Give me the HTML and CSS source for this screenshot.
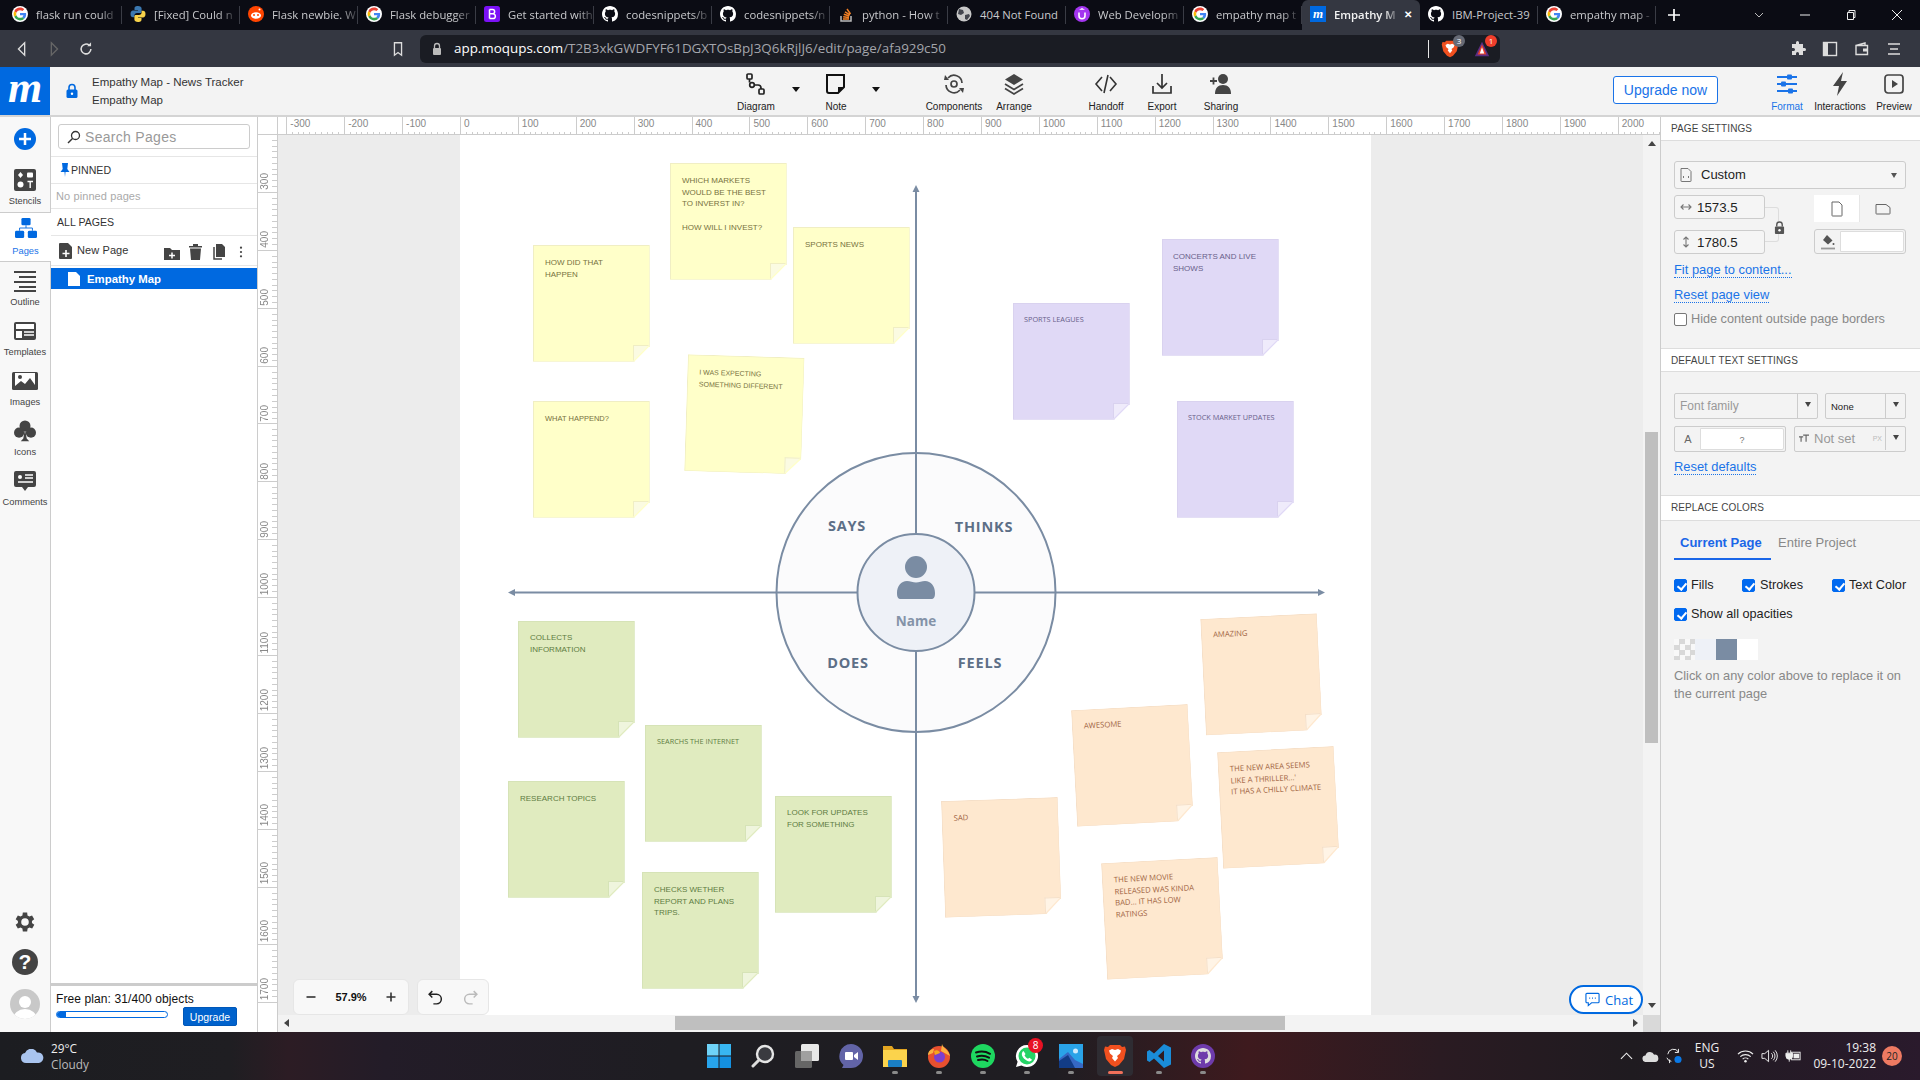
FILE: index.html
```html
<!DOCTYPE html>
<html lang="en">
<head>
<meta charset="utf-8">
<title>Empathy Map - Moqups</title>
<link rel="stylesheet" href="styles.css">
</head>
<body>
<svg class="defs" width="0" height="0" aria-hidden="true">
  <symbol id="g" viewBox="-6 -6 60 60">
    <circle cx="24" cy="24" r="30" fill="#fff"/>
    <path fill="#EA4335" d="M24 9.5c3.54 0 6.71 1.22 9.21 3.6l6.85-6.85C35.9 2.38 30.47 0 24 0 14.62 0 6.51 5.38 2.56 13.22l7.98 6.19C12.43 13.72 17.74 9.5 24 9.5z"/>
    <path fill="#4285F4" d="M46.98 24.55c0-1.57-.15-3.09-.38-4.55H24v9.02h12.94c-.58 2.96-2.26 5.48-4.78 7.18l7.73 6c4.51-4.18 7.09-10.36 7.09-17.65z"/>
    <path fill="#FBBC05" d="M10.53 28.59c-.48-1.45-.76-2.99-.76-4.59s.27-3.14.76-4.59l-7.98-6.19C.92 16.46 0 20.12 0 24c0 3.88.92 7.54 2.56 10.78l7.97-6.19z"/>
    <path fill="#34A853" d="M24 48c6.48 0 11.93-2.13 15.89-5.81l-7.73-6c-2.15 1.45-4.92 2.3-8.16 2.3-6.26 0-11.57-4.22-13.47-9.91l-7.98 6.19C6.51 42.62 14.62 48 24 48z"/>
  </symbol>
  <symbol id="gh" viewBox="0 0 16 16">
    <circle cx="8" cy="8" r="7" fill="#0b0c14"/>
    <path fill="#fff" d="M8 0C3.58 0 0 3.58 0 8c0 3.54 2.29 6.53 5.47 7.59.4.07.55-.17.55-.38 0-.19-.01-.82-.01-1.49-2.01.37-2.53-.49-2.69-.94-.09-.23-.48-.94-.82-1.13-.28-.15-.68-.52-.01-.53.63-.01 1.08.58 1.23.82.72 1.21 1.87.87 2.33.66.07-.52.28-.87.51-1.07-1.78-.2-3.64-.89-3.64-3.95 0-.87.31-1.59.82-2.15-.08-.2-.36-1.02.08-2.12 0 0 .67-.21 2.2.82.64-.18 1.32-.27 2-.27s1.36.09 2 .27c1.53-1.04 2.2-.82 2.2-.82.44 1.1.16 1.92.08 2.12.51.56.82 1.27.82 2.15 0 3.07-1.87 3.75-3.65 3.95.29.25.54.73.54 1.48 0 1.07-.01 1.93-.01 2.2 0 .21.15.46.55.38A8.013 8.013 0 0016 8c0-4.42-3.58-8-8-8z"/>
  </symbol>
  <symbol id="brave" viewBox="0 0 24 24">
    <path fill="#f1501f" d="M7 1h10l2 2 3-.5L23 6l-2 9-5 6-4 2-4-2-5-6-2-9 1-3.500L5 3z"/>
    <path fill="#fff" d="M12 6l3-1 3 1.500-1 3-3 2.500 1 2-3 3.500-3-3.500 1-2-3-2.500-1-3L9 5z"/>
  </symbol>
</svg>

<div class="screen">

  <header class="tabs">
    <div class="tab"><svg class="fav"><use href="#g"/></svg><span class="tab-t">flask run could</span></div>
    <div class="tab"><svg class="fav" viewBox="0 0 16 16"><path fill="#3b78b0" d="M8 0C5 0 4.500 1.300 4.500 2.500V4H8v.6H3C1.500 4.600.5 5.800.5 8s1 3.300 2.500 3.300h1.400V9.500C4.400 8 5.500 7 7 7h3c1 0 1.600-.7 1.600-1.600V2.500C11.600 1 10.300 0 8 0z"/><path fill="#f7d24a" d="M8 16c3 0 3.500-1.300 3.500-2.500V12H8v-.6h5c1.500 0 2.500-1.200 2.500-3.400s-1-3.300-2.500-3.300h-1.400v1.800C11.600 8 10.500 9 9 9H6c-1 0-1.600.7-1.600 1.600v2.900C4.400 15 5.700 16 8 16z"/></svg><span class="tab-t">[Fixed] Could n</span></div>
    <div class="tab"><svg class="fav" viewBox="0 0 16 16"><circle cx="8" cy="8" r="8" fill="#ff4500"/><ellipse cx="8" cy="9.500" rx="5" ry="3.300" fill="#fff"/><circle cx="6" cy="9" r="1" fill="#ff4500"/><circle cx="10" cy="9" r="1" fill="#ff4500"/><circle cx="11.500" cy="3.500" r="1" fill="#fff"/></svg><span class="tab-t">Flask newbie. W</span></div>
    <div class="tab"><svg class="fav"><use href="#g"/></svg><span class="tab-t">Flask debugger</span></div>
    <div class="tab"><svg class="fav" viewBox="0 0 16 16"><rect width="16" height="16" rx="2.500" fill="#7b11f5"/><path fill="none" stroke="#fff" stroke-width="1.500" d="M5.500 3.500v9M5.500 3.500h3a2 2 0 010 4.300h-3M5.500 7.800h3.500a2.300 2.300 0 010 4.700H5.500"/></svg><span class="tab-t">Get started with</span></div>
    <div class="tab"><svg class="fav"><use href="#gh"/></svg><span class="tab-t">codesnippets/b</span></div>
    <div class="tab"><svg class="fav"><use href="#gh"/></svg><span class="tab-t">codesnippets/n</span></div>
    <div class="tab"><svg class="fav" viewBox="0 0 16 16"><path fill="none" stroke="#bcbbbb" stroke-width="1.500" d="M3 10v5h10v-5"/><path fill="none" stroke="#f48024" stroke-width="1.500" d="M5 13h6M5.200 10.700l5.800.7M5.800 8.300l5.500 1.700M7 5.800l5 3M9 3l3.500 5"/></svg><span class="tab-t">python - How t</span></div>
    <div class="tab"><svg class="fav" viewBox="0 0 16 16"><circle cx="8" cy="8" r="7.500" fill="#c8c8c8"/><path fill="#43454e" d="M3 3l4 1 1 3-3 2-3-1zM9 9l4-1 1 2-3 4-2-1z"/></svg><span class="tab-t tab-full">404 Not Found</span></div>
    <div class="tab"><svg class="fav" viewBox="0 0 16 16"><circle cx="8" cy="8" r="8" fill="#a435f0"/><path fill="none" stroke="#fff" stroke-width="1.600" d="M5 6.500v3.200a3 3 0 006 0V6.500"/><path fill="#fff" d="M8 2l3 1.700H5z"/></svg><span class="tab-t">Web Developm</span></div>
    <div class="tab"><svg class="fav"><use href="#g"/></svg><span class="tab-t">empathy map t</span></div>
    <div class="tab tab-on"><span class="fav fav-m">m</span><span class="tab-t">Empathy M</span><span class="tab-x">✕</span></div>
    <div class="tab"><svg class="fav"><use href="#gh"/></svg><span class="tab-t tab-full">IBM-Project-39</span></div>
    <div class="tab"><svg class="fav"><use href="#g"/></svg><span class="tab-t">empathy map -</span></div>
    <svg class="newtab" viewBox="0 0 14 14"><path d="M7 1v12M1 7h12" stroke="#fff" stroke-width="1.700"/></svg>
    <div class="winctl">
      <svg class="wc" viewBox="0 0 10 10"><path d="M1 3l4 4 4-4" fill="none" stroke="#bbb"/></svg>
      <svg class="wc" viewBox="0 0 10 10"><path d="M0 5h10" stroke="#eee"/></svg>
      <svg class="wc" viewBox="0 0 10 10"><path d="M1.500 2.500h6v7h-6zM3 2.500V.5h6v7H7.500" fill="none" stroke="#eee"/></svg>
      <svg class="wc" viewBox="0 0 10 10"><path d="M0 0l10 10M10 0L0 10" stroke="#eee"/></svg>
    </div>
  </header>

  <nav class="bar">
    <svg class="bi" viewBox="0 0 14 18"><path d="M10 2L3 9l7 7z" fill="none" stroke="#ddd" stroke-width="1.500"/></svg>
    <svg class="bi" viewBox="0 0 14 18"><path d="M4 2l7 7-7 7z" fill="none" stroke="#666" stroke-width="1.500"/></svg>
    <svg class="bi" viewBox="0 0 18 18"><path d="M14.500 9a5.500 5.500 0 11-1.800-4.100" fill="none" stroke="#ddd" stroke-width="1.700"/><path d="M14.700 1.500v4.300h-4.300z" fill="#ddd"/></svg>
    <svg class="bi bi-book" viewBox="0 0 14 18"><path d="M3 2h8v14l-4-3-4 3z" fill="none" stroke="#ddd" stroke-width="1.500"/></svg>
    <div class="url">
      <svg class="url-lock" viewBox="0 0 12 14"><path d="M3.500 6V4a2.500 2.500 0 015 0v2" fill="none" stroke="#bbb" stroke-width="1.300"/><rect x="2" y="6" width="8" height="7" rx="1" fill="#bbb"/></svg>
      <span class="url-t"><b>app.moqups.com</b>/T2B3xkGWDFYF61DGXTOsBpJ3Q6kRjlJ6/edit/page/afa929c50</span>
      <span class="url-sep"></span>
      <span class="shield"><svg class="shield-i"><use href="#brave"/></svg><span class="pill pill-g">3</span></span>
      <span class="shield"><svg class="shield-i" viewBox="0 0 20 20"><path d="M10 2l8 16H2z" fill="#5a2c82"/><path d="M10 5l5 11H5z" fill="#e8402a"/><path d="M10 8l2.500 7h-5z" fill="#fff"/></svg><span class="pill pill-r">1</span></span>
    </div>
    <svg class="bi bi-puzzle" viewBox="0 0 16 16"><path fill="#ddd" d="M6 1.500a1.500 1.500 0 013 0V3h4v4h1.500a1.500 1.500 0 010 3H13v4H9v-1.500a1.500 1.500 0 00-3 0V14H2v-4h1.500a1.500 1.500 0 000-3H2V3h4z"/></svg>
    <svg class="bi" viewBox="0 0 16 16"><rect x="1.500" y="1.500" width="13" height="13" fill="none" stroke="#ddd" stroke-width="1.400"/><rect x="1.500" y="1.500" width="4.500" height="13" fill="#ddd"/></svg>
    <svg class="bi" viewBox="0 0 16 16"><path d="M2 4.500h11.500v9H2zM2 4.500l9-2.500v2.500" fill="none" stroke="#ddd" stroke-width="1.400"/><rect x="9" y="7.500" width="5" height="3" fill="#ddd"/></svg>
    <svg class="bi" viewBox="0 0 16 16"><path d="M2 3h12M4 8h8M2 13h12" stroke="#ddd" stroke-width="1.500"/></svg>
  </nav>

  <div class="hdr">
    <div class="hdr-left">
      <div class="logo">m</div>
      <svg class="hdr-lock" viewBox="0 0 14 16"><path d="M4 7V4.500a3 3 0 016 0V7" fill="none" stroke="#0069e0" stroke-width="1.600"/><rect x="1.500" y="6.500" width="11" height="8.500" rx="1.500" fill="#0069e0"/><circle cx="7" cy="10.700" r="1.200" fill="#fff"/></svg>
      <div class="hdr-names"><div>Empathy Map - News Tracker</div><div>Empathy Map</div></div>
    </div>
    <div class="tool"><svg class="tool-i" viewBox="0 0 24 24"><g fill="none" stroke="#222" stroke-width="1.700"><rect x="3" y="2" width="5" height="5" rx="1"/><rect x="15" y="17" width="5" height="5" rx="1"/><circle cx="8" cy="13" r="2.300"/><path d="M5.500 7v3.500M10.300 13H14a3 3 0 013 3v1"/></g></svg><span>Diagram</span></div>
    <span class="caret"></span>
    <div class="tool"><svg class="tool-i" viewBox="0 0 24 24"><path d="M3 3h17v12l-6 6H5a2 2 0 01-2-2z" fill="none" stroke="#111" stroke-width="2"/><path d="M14 21v-6h6z" fill="#111"/></svg><span>Note</span></div>
    <span class="caret caret-w"></span>
    <div class="tool t-comp"><svg class="tool-i" viewBox="0 0 24 24"><g fill="none" stroke="#444" stroke-width="1.700"><path d="M20 11a8 8 0 00-14-5"/><path d="M4 13a8 8 0 0014 5"/><circle cx="12" cy="12" r="3"/></g><path d="M3 3l4 5H2zM21 21l-4-5h5z" fill="#444"/></svg><span>Components</span></div>
    <div class="tool"><svg class="tool-i" viewBox="0 0 24 24"><path d="M12 2l9 5.500-9 5.500-9-5.500z" fill="#444"/><path d="M3 12l9 5.500 9-5.500M3 16.500L12 22l9-5.500" fill="none" stroke="#444" stroke-width="1.700"/></svg><span>Arrange</span></div>
    <div class="tool t-hand"><svg class="tool-i" viewBox="0 0 24 24"><path d="M8 5l-6 7 6 7M16 5l6 7-6 7M14 3l-4 18" fill="none" stroke="#333" stroke-width="1.600"/></svg><span>Handoff</span></div>
    <div class="tool t-exp"><svg class="tool-i" viewBox="0 0 24 24"><path d="M12 2v14M7 11l5 5 5-5M3 14v7h18v-7" fill="none" stroke="#333" stroke-width="1.700"/></svg><span>Export</span></div>
    <div class="tool t-share"><svg class="tool-i" viewBox="0 0 24 24"><circle cx="14" cy="7" r="5" fill="#444"/><path d="M6 22c0-6 3-9 8-9s8 3 8 9z" fill="#444"/><path d="M1 9h7M4.500 5.500v7" stroke="#444" stroke-width="1.800"/></svg><span>Sharing</span></div>
    <button class="upg-now">Upgrade now</button>
    <div class="tool t-fmt on"><svg class="tool-i" viewBox="0 0 24 24"><path d="M2 5h20M2 12h20M2 19h20" stroke="#1a73e8" stroke-width="1.800"/><rect x="12" y="2.500" width="5" height="5" rx="1" fill="#1a73e8"/><rect x="6" y="9.500" width="5" height="5" rx="1" fill="#1a73e8"/><rect x="13" y="16.500" width="5" height="5" rx="1" fill="#1a73e8"/></svg><span>Format</span></div>
    <div class="tool t-int"><svg class="tool-i" viewBox="0 0 24 24"><path d="M15 0L5 14h6l-2 10 10-15h-6z" fill="#444"/></svg><span>Interactions</span></div>
    <div class="tool t-prev"><svg class="tool-i" viewBox="0 0 24 24"><rect x="3" y="3" width="18" height="18" rx="3" fill="none" stroke="#444" stroke-width="1.700"/><path d="M10 8l6 4-6 4z" fill="#444"/></svg><span>Preview</span></div>
  </div>

  <main class="main">
    <aside class="rail">
      <div class="rail-add"><svg class="add" viewBox="0 0 22 22"><circle cx="11" cy="11" r="11" fill="#0069e0"/><path d="M11 5v12M5 11h12" stroke="#fff" stroke-width="2.500"/></svg></div>
      <div class="ri ri-st"><svg class="ri-i" viewBox="0 0 22 22"><rect width="22" height="22" rx="2" fill="#444"/><path d="M6.500 3l2.500 3-2.500 3L4 6z" fill="#fff"/><rect x="13" y="3.500" width="6" height="5" rx="1" fill="#fff"/><circle cx="6.500" cy="15.500" r="3" fill="#fff"/><path d="M13.500 12.500h5.500M16.200 12.500v6.500" stroke="#fff" stroke-width="1.400"/></svg><span>Stencils</span></div>
      <div class="ri ri-on"><svg class="ri-i" viewBox="0 0 24 22"><rect x="7" y="0" width="10" height="8" rx="1.500" fill="#0069e0"/><rect x="0" y="14" width="10" height="8" rx="1.500" fill="#0069e0"/><rect x="14" y="14" width="10" height="8" rx="1.500" fill="#0069e0"/><path d="M12 8v3M5 14v-3h14v3" fill="none" stroke="#0069e0"/></svg><span>Pages</span></div>
      <div class="ri"><svg class="ri-i" viewBox="0 0 22 22"><path d="M0 2h22M5 7h17M0 12h22M5 17h17M0 21h22" stroke="#444" stroke-width="2"/></svg><span>Outline</span></div>
      <div class="ri"><svg class="ri-i" viewBox="0 0 22 18"><rect width="22" height="18" rx="2" fill="#444"/><rect x="2" y="2" width="18" height="5" fill="#fff"/><rect x="2" y="9" width="6" height="7" fill="#fff"/><path d="M10 10h10M10 13h10" stroke="#fff" stroke-width="1.500"/></svg><span>Templates</span></div>
      <div class="ri"><svg class="ri-i ri-w" viewBox="0 0 26 18"><rect width="26" height="18" rx="1.500" fill="#444"/><rect x="3" y="1" width="20" height="16" fill="#fff"/><circle cx="8" cy="5" r="2" fill="#444"/><path d="M3 14l6-5 4 3 5-6 5 7v4H3z" fill="#444"/></svg><span>Images</span></div>
      <div class="ri"><svg class="ri-i ri-w" viewBox="0 0 26 26"><circle cx="13" cy="7" r="6.500" fill="#444"/><circle cx="6" cy="15" r="6" fill="#444"/><circle cx="20" cy="15" r="6" fill="#444"/><path d="M13 10l2 12 3 3H8l3-3z" fill="#444"/></svg><span>Icons</span></div>
      <div class="ri"><svg class="ri-i" viewBox="0 0 22 20"><path d="M2 0h18a2 2 0 012 2v12a2 2 0 01-2 2h-6l-3 4-3-4H2a2 2 0 01-2-2V2a2 2 0 012-2z" fill="#444"/><circle cx="6" cy="6" r="2" fill="#fff"/><path d="M11 4h8M11 7h8M4 11h15" stroke="#fff" stroke-width="1.400"/></svg><span>Comments</span></div>
      <div class="rail-bot">
        <svg class="bot-i" viewBox="0 0 24 24"><path fill="#444" d="M19.400 13a7.600 7.600 0 000-2l2.100-1.600-2-3.500-2.500 1a7.500 7.500 0 00-1.700-1L15 3.200h-4l-.4 2.700a7.500 7.500 0 00-1.700 1l-2.500-1-2 3.500L6.500 11a7.600 7.600 0 000 2l-2.100 1.600 2 3.500 2.500-1a7.500 7.500 0 001.700 1l.4 2.700h4l.4-2.700a7.500 7.500 0 001.700-1l2.500 1 2-3.500zM13 15.500a3.500 3.500 0 110-7 3.500 3.500 0 010 7z" transform="translate(-1 0)"/></svg>
        <span class="help">?</span>
        <svg class="avatar" viewBox="0 0 30 30"><defs><clipPath id="av"><circle cx="15" cy="15" r="15"/></clipPath></defs><circle cx="15" cy="15" r="15" fill="#c8c8c8"/><g clip-path="url(#av)" fill="#fff"><circle cx="15" cy="13" r="6"/><ellipse cx="15" cy="30" rx="12" ry="10"/></g></svg>
      </div>
    </aside>

    <section class="pages">
      <div class="search"><svg class="s-i" viewBox="0 0 14 14"><circle cx="8.500" cy="5.500" r="4" fill="none" stroke="#333" stroke-width="1.300"/><path d="M5.500 8.500L1 13" stroke="#333" stroke-width="1.500"/></svg><span>Search Pages</span></div>
      <div class="prow p-pin"><svg class="pin" viewBox="0 0 10 14"><path d="M2 0h6l-.7 6L9.500 9h-4L5 14l-.5-5h-4l2.200-3z" fill="#0069e0"/></svg>PINNED</div>
      <div class="prow p-none">No pinned pages</div>
      <div class="prow p-all">ALL PAGES</div>
      <div class="prow p-new">
        <svg class="np-i" viewBox="0 0 14 16"><path d="M1 0h8l4 4v11a1 1 0 01-1 1H1a1 1 0 01-1-1V1a1 1 0 011-1z" fill="#444"/><path d="M7 7v7M3.500 10.500h7" stroke="#fff" stroke-width="1.600"/></svg>
        <span class="np-t">New Page</span>
        <svg class="np-a n-folder" viewBox="0 0 16 13"><path d="M0 1h6l2 2h8v10H0z" fill="#444"/><path d="M8 5.500v6M5 8.500h6" stroke="#fff" stroke-width="1.500"/></svg>
        <svg class="np-a n-trash" viewBox="0 0 13 16"><path d="M0 2h13v1.500H0zM4 0h5v2H4zM1 4.500h11L11 16H2z" fill="#444"/></svg>
        <svg class="np-a n-copy" viewBox="0 0 14 16"><path d="M4 0h6l3 3v10H4z" fill="#444"/><path d="M2 3v12h8" fill="none" stroke="#444" stroke-width="1.500"/></svg>
        <svg class="np-a n-more" viewBox="0 0 4 14"><circle cx="2" cy="2" r="1.300" fill="#444"/><circle cx="2" cy="7" r="1.300" fill="#444"/><circle cx="2" cy="12" r="1.300" fill="#444"/></svg>
      </div>
      <div class="pitem"><svg class="pi-i" viewBox="0 0 12 14"><path d="M0 0h8l4 4v10H0z" fill="#fff"/></svg>Empathy Map</div>
      <div class="plan">
        <div class="plan-t">Free plan: 31/400 objects</div>
        <div class="plan-r">
          <div class="prog"><div class="prog-f"></div></div>
          <button class="upg">Upgrade</button>
        </div>
      </div>
    </section>

    <section class="work">
      <div class="corner"></div>
      <div class="rt">
        <span>-300</span><span>-200</span><span>-100</span><span>0</span><span>100</span><span>200</span><span>300</span><span>400</span><span>500</span><span>600</span><span>700</span><span>800</span><span>900</span><span>1000</span><span>1100</span><span>1200</span><span>1300</span><span>1400</span><span>1500</span><span>1600</span><span>1700</span><span>1800</span><span>1900</span><span>2000</span>
      </div>
      <div class="rl">
        <span><i>300</i></span><span><i>400</i></span><span><i>500</i></span><span><i>600</i></span><span><i>700</i></span><span><i>800</i></span><span><i>900</i></span><span><i>1000</i></span><span><i>1100</i></span><span><i>1200</i></span><span><i>1300</i></span><span><i>1400</i></span><span><i>1500</i></span><span><i>1600</i></span><span><i>1700</i></span>
      </div>

      <div class="canvas">
        <div class="page">
          <svg class="diagram" viewBox="460 135 911 880">
            <g stroke="#7a8ca3" stroke-width="2" fill="none">
              <path d="M916 189V1000M511 592.500H1322"/>
            </g>
            <path d="M916 185l3.500 7h-7zM916 1003l3.500-7h-7zM508 592.500l7-3.500v7zM1325 592.500l-7-3.500v7z" fill="#7a8ca3"/>
            <circle cx="916" cy="592.500" r="139.500" fill="#fbfbfc" stroke="#7a8ca3" stroke-width="2"/>
            <path d="M916 453V732M776 592.500H1056" stroke="#7a8ca3" stroke-width="2"/>
            <circle cx="916" cy="592.500" r="58.500" fill="#eef1f7" stroke="#7a8ca3" stroke-width="2"/>
            <circle cx="916" cy="567" r="11" fill="#7a8ca3"/>
            <path d="M897 593c0-7 4-12 10-12 3 0 6 1.500 9 1.500s6-1.500 9-1.500c6 0 10 5 10 12 0 4-1 6-4 6h-30c-3 0-4-2-4-6z" fill="#7a8ca3"/>
            <text class="d-l" x="847" y="530.500">SAYS</text>
            <text class="d-l" x="984" y="531.500">THINKS</text>
            <text class="d-l" x="848" y="668">DOES</text>
            <text class="d-l" x="980" y="668">FEELS</text>
            <text class="d-n" x="916" y="626">Name</text>
          </svg>

          <div class="note y s1">WHICH MARKETS<br>WOULD BE THE BEST<br>TO INVERST IN?<br><br>HOW WILL I INVEST?</div>
          <div class="note y s2">SPORTS NEWS</div>
          <div class="note y s3">HOW DID THAT<br>HAPPEN</div>
          <div class="note y s4 sm">WHAT HAPPEND?</div>
          <div class="note y s5">I WAS EXPECTING<br>SOMETHING DIFFERENT</div>

          <div class="note p s6">CONCERTS AND LIVE<br>SHOWS</div>
          <div class="note p s7 xs">SPORTS LEAGUES</div>
          <div class="note p s8 xs">STOCK MARKET UPDATES</div>

          <div class="note g s9">COLLECTS<br>INFORMATION</div>
          <div class="note g s10 xs">SEARCHS THE INTERNET</div>
          <div class="note g s11">RESEARCH TOPICS</div>
          <div class="note g s12">LOOK FOR UPDATES<br>FOR SOMETHING</div>
          <div class="note g s13">CHECKS WETHER<br>REPORT AND PLANS<br>TRIPS.</div>

          <div class="note o s14">AMAZING</div>
          <div class="note o s15">AWESOME</div>
          <div class="note o s16">THE NEW AREA SEEMS<br>LIKE A THRILLER...'<br>IT HAS A CHILLY CLIMATE</div>
          <div class="note o s17">THE NEW MOVIE<br>RELEASED WAS KINDA<br>BAD... IT HAS LOW<br>RATINGS</div>
          <div class="note o s18">SAD</div>
        </div>

        <div class="zoomctl">
          <div class="zc zc-zoom"><svg class="zi" viewBox="0 0 12 12"><path d="M1.500 6h9" stroke="#333" stroke-width="1.600"/></svg><b>57.9%</b><svg class="zi" viewBox="0 0 12 12"><path d="M1.500 6h9M6 1.500v9" stroke="#333" stroke-width="1.600"/></svg></div>
          <div class="zc zc-undo"><svg class="ui" viewBox="0 0 16 16"><path d="M5 2L2 5l3 3M2 5h7a4.500 4.500 0 010 9H6" fill="none" stroke="#222" stroke-width="1.400"/></svg><svg class="ui" viewBox="0 0 16 16"><path d="M11 2l3 3-3 3M14 5H7a4.500 4.500 0 000 9h3" fill="none" stroke="#bbb" stroke-width="1.400"/></svg></div>
        </div>
        <button class="chat"><svg class="chat-i" viewBox="0 0 16 16"><path d="M2 1.500h12a1 1 0 011 1v8a1 1 0 01-1 1H7l-3.500 3v-3H2a1 1 0 01-1-1v-8a1 1 0 011-1z" fill="none" stroke="#0069e0" stroke-width="1.200"/><path d="M4.500 6.500h1M7.500 6.500h1M10.500 6.500h1" stroke="#0069e0" stroke-width="1.200"/></svg>Chat</button>
      </div>

      <div class="vs"><span class="tri tri-u"></span><div class="vs-th"></div><span class="tri tri-d"></span></div>
      <div class="hs"><span class="tri tri-l"></span><div class="hs-th"></div><span class="tri tri-r"></span></div>
      <div class="corner2"></div>
    </section>

    <aside class="panel">
      <div class="ph">PAGE SETTINGS</div>
      <div class="pb">
        <div class="sel"><svg class="doc" viewBox="0 0 12 14"><path d="M1 .5h7l3 3V13a.5.5 0 01-.5.5h-9A.5.5 0 011 13z" fill="none" stroke="#777"/><path d="M4 8l-1 1 1 1M8 8l1 1-1 1" fill="none" stroke="#777"/></svg><span>Custom</span><i class="dn"></i></div>
        <div class="dims">
          <div class="dim-l">
            <div class="inp"><svg class="arr" viewBox="0 0 12 12"><path d="M1 6h10M3.500 3.500L1 6l2.500 2.500M8.500 3.500L11 6 8.500 8.500" fill="none" stroke="#777" stroke-width="1.100"/></svg><span>1573.5</span></div>
            <div class="inp"><svg class="arr" viewBox="0 0 12 12"><path d="M6 1v10M3.500 3.500L6 1l2.500 2.500M3.500 8.500L6 11l2.500-2.500" fill="none" stroke="#777" stroke-width="1.100"/></svg><span>1780.5</span></div>
          </div>
          <div class="dim-m"><span class="brk"></span><svg class="lk" viewBox="0 0 12 14"><path d="M3 6V4a3 3 0 016 0v2" fill="none" stroke="#555" stroke-width="1.500"/><rect x="1" y="6" width="10" height="8" rx="1" fill="#555"/><circle cx="6" cy="10" r="1.300" fill="#fff"/></svg></div>
          <div class="dim-r">
            <div class="orient">
              <div class="or or-on"><svg class="or-i" viewBox="0 0 12 16"><path d="M1 1h7l3 3v10.500a.5.500 0 01-.5.500h-9a.5.500 0 01-.5-.5z" fill="none" stroke="#666"/></svg></div>
              <div class="or"><svg class="or-l" viewBox="0 0 16 12"><path d="M1 1.500h10l4 3V10.500a.5.500 0 01-.5.500h-13a.5.500 0 01-.5-.5z" fill="none" stroke="#666"/></svg></div>
            </div>
            <div class="fill"><svg class="fill-i" viewBox="0 0 16 16"><path d="M7 1l5.500 5.500-4.500 4L3 6z" fill="#555"/><circle cx="13.500" cy="10" r="1" fill="#555"/><path d="M1 14.500h14" stroke="#999" stroke-width="1.800"/></svg><span class="fill-b"></span></div>
          </div>
        </div>
        <a class="lnk l1">Fit page to content...</a>
        <a class="lnk l2">Reset page view</a>
        <label class="hide"><span class="cb"></span>Hide content outside page borders</label>
      </div>
      <div class="ph ph2">DEFAULT TEXT SETTINGS</div>
      <div class="pb pb2">
        <div class="frow">
          <div class="combo c-font"><span class="c-t">Font family</span><span class="c-b"><i class="dn"></i></span></div>
          <div class="combo c-none"><span class="c-t">None</span><span class="c-b"><i class="dn"></i></span></div>
        </div>
        <div class="frow frow2">
          <div class="combo c-a"><span class="a-l">A</span><span class="a-v">?</span></div>
          <div class="combo c-size"><svg class="sz-i" viewBox="0 0 12 10"><path d="M0 3h5M2.500 3v6M5 1h7M8.500 1v8" fill="none" stroke="#666" stroke-width="1.400"/></svg><span class="c-t">Not set</span><span class="px">PX</span><span class="c-b"><i class="dn"></i></span></div>
        </div>
        <a class="lnk l3">Reset defaults</a>
      </div>
      <div class="ph ph3">REPLACE COLORS</div>
      <div class="pb pb3">
        <div class="rtabs"><span class="rt-on">Current Page</span><span class="rt-off">Entire Project</span></div>
        <div class="chk">
          <label class="ck ck1"><span class="cb on"></span>Fills</label>
          <label class="ck ck2"><span class="cb on"></span>Strokes</label>
          <label class="ck"><span class="cb on"></span>Text Color</label>
        </div>
        <label class="ck ck-all"><span class="cb on"></span>Show all opacities</label>
        <div class="sw"><span class="sw-c"></span><span class="sw-1"></span><span class="sw-2"></span><span class="sw-3"></span></div>
        <p class="hint">Click on any color above to replace it on the current page</p>
      </div>
    </aside>
  </main>

  <footer class="task">
    <div class="weather">
      <svg class="w-i" viewBox="0 0 24 14"><path d="M6 14a5 5 0 01-1-9.900 6.500 6.500 0 0112-.6A5.300 5.300 0 0119 14z" fill="#a9c4ee"/></svg>
      <div class="w-t"><div>29°C</div><div class="w-d">Cloudy</div></div>
    </div>
    <div class="tk"><svg class="ti" viewBox="0 0 24 24"><rect x="0" y="0" width="11.500" height="11.500" fill="#6fd3f8"/><rect x="12.500" y="0" width="11.500" height="11.500" fill="#38b6f1"/><rect x="0" y="12.500" width="11.500" height="11.500" fill="#27a4ec"/><rect x="12.500" y="12.500" width="11.500" height="11.500" fill="#1490e0"/></svg></div>
    <div class="tk"><svg class="ti" viewBox="0 0 24 24"><circle cx="14" cy="10" r="8" fill="#3a3b40" stroke="#e6e6e6" stroke-width="2.400"/><path d="M8 16l-6 6" stroke="#ddd" stroke-width="3" stroke-linecap="round"/></svg></div>
    <div class="tk"><svg class="ti" viewBox="0 0 24 24"><rect x="0" y="7" width="17" height="17" rx="1.500" fill="#666"/><rect x="6" y="0" width="18" height="17" rx="1.500" fill="#e8e8e8"/><rect x="6" y="7" width="11" height="10" fill="#a0a0a0"/></svg></div>
    <div class="tk"><svg class="ti" viewBox="0 0 24 24"><path d="M12 0a12 12 0 110 24H3l1.500-3A12 12 0 0112 0z" fill="#6264a7"/><rect x="6" y="8" width="8" height="8" rx="1" fill="#fff"/><path d="M15 11l4-3v8l-4-3z" fill="#fff"/></svg></div>
    <div class="tk"><svg class="ti" viewBox="0 0 24 24"><path d="M0 2h9l2 3h13v8H0z" fill="#e3a521"/><path d="M0 6h24v17H0z" fill="#fbd34c"/><rect x="5" y="16" width="14" height="7" rx="1" fill="#1a7fc4"/></svg><span class="dot"></span></div>
    <div class="tk"><svg class="ti" viewBox="0 0 24 24"><circle cx="12" cy="13" r="11" fill="#e8502f"/><path d="M15 0c1 4 7 6 8 12L14 7z" fill="#fbb040"/><path d="M1 11c0-4 3-6 6-6l-1 4z" fill="#fbb040"/><circle cx="12.500" cy="13" r="5.500" fill="#7b3fd0"/><path d="M7 7c3-2 6 0 6 2l-5 2z" fill="#f6a71c"/></svg><span class="dot"></span></div>
    <div class="tk"><svg class="ti" viewBox="0 0 24 24"><circle cx="12" cy="12" r="12" fill="#1ed760"/><path d="M5 8.500c5-1.500 10-1 14 1.300M6 12.500c4-1.200 8.500-.8 12 1.200M7 16c3.500-1 7-.7 9.500 1" fill="none" stroke="#111" stroke-width="2" stroke-linecap="round"/></svg><span class="dot"></span></div>
    <div class="tk"><svg class="ti" viewBox="0 0 24 24"><path d="M12 1a11 11 0 11-5.500 20.500L1 23l1.600-5.200A11 11 0 0112 1z" fill="#fff"/><circle cx="12" cy="12" r="8.500" fill="#25d366"/><path d="M8.500 7l2 3-1 1.500c1 1.500 2 2.500 3.500 3.300l1.500-1 2.500 2c-1 2-3 2-5 1-2-1-4-3-5-5.300-.5-2 0-3.500 1.500-4.500z" fill="#fff"/></svg><span class="badge8">8</span><span class="dot"></span></div>
    <div class="tk"><svg class="ti" viewBox="0 0 24 24"><rect width="24" height="24" fill="#2aa3e8"/><circle cx="16.500" cy="7" r="2.500" fill="#cfeafc"/><path d="M0 15l9-7 7 8 8 4v4H0z" fill="#3668c4"/><path d="M0 17l9-6 7 13H0z" fill="#123c86"/></svg><span class="dot"></span></div>
    <div class="tk tk-on"><svg class="ti"><use href="#brave"/></svg><span class="dot dot-on"></span></div>
    <div class="tk"><svg class="ti" viewBox="0 0 24 24"><path d="M17 0l7 3.500v17L17 24 7 14.500 2.500 18 0 16.500V7.500L2.500 6 7 9.500zM17 6.500L11 12l6 5.500z" fill="#1a8cd8"/></svg><span class="dot"></span></div>
    <div class="tk"><svg class="ti" viewBox="0 0 24 24"><circle cx="12" cy="12" r="12" fill="#6e3bab"/><path fill="#ddd" transform="translate(4 4)" d="M8 0C3.580 0 0 3.580 0 8c0 3.540 2.290 6.530 5.470 7.590.4.070.55-.17.55-.38 0-.19-.01-.82-.01-1.490-2.010.37-2.530-.49-2.690-.94-.09-.23-.48-.94-.82-1.130-.28-.15-.68-.52-.01-.53.63-.01 1.080.58 1.230.82.720 1.210 1.870.87 2.330.66.070-.52.280-.87.510-1.070-1.780-.2-3.640-.89-3.640-3.950 0-.87.310-1.590.820-2.150-.080-.2-.360-1.020.080-2.120 0 0 .670-.21 2.200.82.640-.18 1.320-.27 2-.27s1.360.09 2 .27c1.530-1.040 2.200-.82 2.200-.82.440 1.100.160 1.920.080 2.120.510.560.820 1.270.820 2.150 0 3.070-1.870 3.750-3.650 3.950.290.25.540.73.540 1.480 0 1.070-.01 1.930-.01 2.200 0 .21.150.46.550.38A8.013 8.013 0 0016 8c0-4.420-3.580-8-8-8z"/></svg><span class="dot"></span></div>
    <div class="tray">
      <svg class="tr tr-ch" viewBox="0 0 14 8"><path d="M1 7l6-6 6 6" fill="none" stroke="#eee" stroke-width="1.200"/></svg>
      <svg class="tr tr-cl" viewBox="0 0 18 12"><path d="M4 12a3.500 3.500 0 01-.5-7A5 5 0 0113 4a4 4 0 011 8z" fill="#ddd"/></svg>
      <svg class="tr tr-sy" viewBox="0 0 18 18"><path d="M2 7a6.500 6.500 0 0112-2.500M14 1v4h-4M4 17v-4" fill="none" stroke="#eee" stroke-width="1.100"/><path d="M1 11a6 6 0 005 4" fill="none" stroke="#eee" stroke-width="1.100"/><circle cx="13.500" cy="13" r="4" fill="#0a78e6"/></svg>
      <div class="lang"><div>ENG</div><div>US</div></div>
      <svg class="tr tr-wf" viewBox="0 0 18 14"><path d="M1 5a11.500 11.500 0 0116 0M3.500 7.700a8 8 0 0111 0M6 10.300a4.300 4.300 0 016 0" fill="none" stroke="#eee" stroke-width="1.200"/><circle cx="9" cy="12.500" r="1.300" fill="#eee"/></svg>
      <svg class="tr tr-vo" viewBox="0 0 18 14"><path d="M1 4.500h3l4-3.500v12L4 9.500H1z" fill="none" stroke="#eee"/><path d="M11 4a4 4 0 010 6M13 2.500a6.500 6.500 0 010 9M15 1a9 9 0 010 12" fill="none" stroke="#eee"/></svg>
      <svg class="tr tr-ba" viewBox="0 0 18 14"><path d="M3 1v3M6 1v3M1 4h7v3a3 3 0 01-7 0zM4.500 10v3" stroke="#eee" fill="#eee" stroke-width="1"/><rect x="7" y="3" width="9" height="8" fill="none" stroke="#eee"/><rect x="9" y="4.500" width="6" height="5" fill="#eee"/></svg>
      <div class="clock"><div>19:38</div><div>09-10-2022</div></div>
      <span class="notif">20</span>
    </div>
  </footer>
</div>
</body>
</html>
```

FILE: styles.css
```css
* { box-sizing: border-box; }
html, body { margin: 0; padding: 0; height: 100%; }
body { font-family: "Liberation Sans", Arial, sans-serif; overflow: hidden; background: #fff; color: #222; }
.defs { position: absolute; }
.screen { width: 1920px; height: 1080px; display: flex; flex-direction: column; overflow: hidden; }

/* browser tabs */
.tabs { height: 30px; background: #0b0c14; display: flex; align-items: center; padding-left: 4px; flex: none; }
.tab { width: 118px; height: 30px; display: flex; align-items: center; padding: 0 0 2px 8px; position: relative; color: #c8c9cc; font: 11.300px "Open Sans", sans-serif; flex: none; }
.tab::after { content: ""; position: absolute; right: 0; top: 6px; bottom: 6px; width: 1px; background: #3a3c45; }
.fav { width: 16px; height: 16px; flex: none; margin-right: 8px; }
.tab-t { white-space: nowrap; flex: none; -webkit-mask-image: linear-gradient(90deg, #000 82%, rgba(0,0,0,.25)); mask-image: linear-gradient(90deg, #000 82%, rgba(0,0,0,.25)); }
.tab-full { -webkit-mask-image: none; mask-image: none; }
.tab-on { background: #343741; color: #f2f2f2; font-weight: 600; border-radius: 6px 6px 0 0; }
.tab-on::after { display: none; }
.tab-x { color: #fff; font-size: 10px; margin-left: auto; margin-right: 8px; }
.fav-m { background: #0069e0; color: #fff; font: italic bold 13px/16px "Liberation Serif", serif; text-align: center; display: block; }
.newtab { width: 14px; height: 14px; margin-left: 11px; flex: none; }
.winctl { margin-left: auto; display: flex; padding-right: 0; }
.wc { width: 10px; height: 10px; margin-right: 36px; display: block; }
.wc:last-child { margin-right: 18px; }

/* browser bar */
.bar { height: 37px; background: #343741; display: flex; align-items: center; padding-left: 6px; flex: none; }
.bi { width: 32px; height: 16px; flex: none; }
.bi-book { margin-left: 280px; }
.bi-puzzle { margin-left: 282px; }
.url { width: 1080px; margin-left: 6px; height: 28px; border-radius: 6px; background: #1a1c23; display: flex; align-items: center; flex: none; }
.url-lock { width: 12px; height: 14px; margin-left: 11px; flex: none; }
.url-t { margin: -2px 0 0 11px; width: 974px; font: 13.400px "Open Sans", sans-serif; color: #a4a6ac; white-space: nowrap; flex: none; }
.url-t b { color: #fff; font-weight: 400; }
.url-sep { width: 1px; height: 18px; background: #e8e8e8; flex: none; }
.shield { position: relative; width: 28px; height: 20px; margin-left: 4px; display: block; flex: none; }
.shield-i { width: 18px; height: 20px; display: block; margin-left: 8px; }
.pill { position: absolute; top: -4px; left: 20px; width: 12px; height: 12px; border-radius: 50%; font: 8px/12px "Open Sans", sans-serif; color: #fff; text-align: center; }
.pill-g { background: #666a75; }
.pill-r { background: #ef3e2b; }

/* app header */
.hdr { height: 50px; background: #f3f3f3; border-bottom: 2px solid #d4d4d4; display: flex; align-items: flex-start; flex: none; }
.hdr-left { width: 726px; display: flex; height: 48px; flex: none; }
.logo { width: 50px; height: 48px; background: #0069e0; color: #fff; font: italic bold 44px/42px "Liberation Serif", serif; text-align: center; flex: none; }
.hdr-lock { width: 14px; height: 16px; margin: 16px 0 0 15px; flex: none; }
.hdr-names { margin-left: 13px; padding-top: 6px; font-size: 11.500px; line-height: 18px; color: #333; }
.tool { width: 60px; height: 48px; display: flex; flex-direction: column; align-items: center; font-size: 10px; color: #222; flex: none; padding-top: 5px; }
.tool span { margin-top: 5px; white-space: nowrap; line-height: 12px; }
.tool-i { width: 24px; height: 24px; display: block; flex: none; }
.caret { width: 20px; height: 48px; flex: none; position: relative; }
.caret::after { content: ""; position: absolute; left: 6px; top: 20px; border: 4px solid transparent; border-top: 5px solid #111; border-bottom: 0; }
.caret-w { width: 22px; }
.t-comp { margin-left: 36px; }
.t-hand { margin-left: 32px; }
.t-exp { width: 52px; }
.t-share { margin-left: 3px; }
.upg-now { margin: 9px 0 0 362px; width: 105px; height: 28px; border: 1px solid #1a73e8; border-radius: 3px; background: #fff; color: #1a73e8; font: 14px "Liberation Sans", sans-serif; flex: none; padding: 0; }
.t-fmt { width: 54px; margin-left: 42px; }
.t-fmt.on { color: #1a73e8; }
.t-int { width: 52px; }
.t-prev { width: 52px; margin-left: 2px; }

/* main layout */
.main { flex: 1; display: flex; min-height: 0; }

/* left rail */
.rail { width: 51px; background: #f8f8f8; border-right: 1px solid #ccc; display: flex; flex-direction: column; flex: none; position: relative; }
.rail-add { height: 45px; display: flex; justify-content: center; padding-top: 11px; flex: none; }
.add { width: 22px; height: 22px; }
.ri { height: 50px; display: flex; flex-direction: column; align-items: center; font-size: 9.300px; color: #444; flex: none; padding-top: 8px; }
.ri span { margin-top: 4px; line-height: 12px; }
.ri-i { width: 22px; height: 22px; flex: none; }
.ri-w { width: 26px; }
.ri-st { height: 51px; padding-top: 7px; border-bottom: 1px solid #ccc; }
.ri-on { background: #fff; color: #1a73e8; margin-right: -1px; border-bottom: 1px solid #ccc; height: 49px; padding-top: 4px; position: relative; }
.ri-on span { margin-top: 6px; }
.rail-bot { margin-top: auto; display: flex; flex-direction: column; align-items: center; padding-bottom: 13px; }
.bot-i { width: 26px; height: 26px; display: block; }
.help { width: 26px; height: 26px; margin-top: 14px; border-radius: 50%; background: #444; color: #fff; font: bold 21px/26px "Liberation Sans", sans-serif; text-align: center; display: block; }
.avatar { width: 30px; height: 30px; margin-top: 14px; display: block; }

/* pages panel */
.pages { width: 207px; border-right: 1px solid #ccc; display: flex; flex-direction: column; flex: none; background: #fff; }
.search { height: 25px; margin: 7px 7px 0; border: 1px solid #ccc; border-radius: 3px; display: flex; align-items: center; padding-left: 8px; color: #999; font-size: 14px; letter-spacing: .3px; flex: none; }
.s-i { width: 14px; height: 14px; margin-right: 4px; flex: none; }
.prow { display: flex; align-items: center; padding-left: 6px; font-size: 10.600px; border-bottom: 1px solid #e6e6e6; flex: none; color: #333; }
.p-pin { height: 28px; margin-top: 7px; border-top: 1px solid #e6e6e6; padding-left: 9px; }
.pin { width: 10px; height: 14px; margin-right: 1px; }
.p-none { height: 25px; color: #aaa; font-size: 11px; padding-left: 5px; letter-spacing: .1px; }
.p-all { height: 27px; }
.p-new { height: 30px; padding-left: 8px; border-bottom: 1px solid #e6e6e6; position: relative; font-size: 11px; }
.np-i { width: 14px; height: 16px; margin-right: 4px; flex: none; }
.np-t { margin-top: -2px; width: 87px; color: #333; letter-spacing: .1px; flex: none; }
.np-a { flex: none; height: 16px; margin-top: 2px; }
.n-folder { width: 16px; height: 13px; margin-top: 6px; margin-right: 9px; }
.n-trash { width: 13px; margin-right: 10px; }
.n-copy { width: 14px; margin-right: 13px; }
.n-more { width: 4px; height: 12px; }
.pitem { height: 21px; margin-top: 2px; background: #0069e0; color: #fff; display: flex; align-items: center; padding-left: 17px; font-size: 11.400px; font-weight: 700; flex: none; }
.pi-i { width: 12px; height: 14px; margin-right: 7px; flex: none; }
.plan { margin-top: auto; height: 49px; border-top: 3px solid #ccc; padding: 5px 0 0 5px; flex: none; }
.plan-t { font-size: 12px; line-height: 16px; color: #111; letter-spacing: .1px; }
.plan-r { display: flex; }
.prog { width: 112px; height: 7px; margin-top: 4px; border: 1px solid #0069e0; border-radius: 4px; flex: none; overflow: hidden; }
.prog-f { width: 9px; height: 100%; background: #0069e0; }
.upg { width: 54px; height: 19px; margin: 0 0 0 15px; padding: 0; background: #0062cc; border: 1px solid #0057b8; border-radius: 2px; color: #fff; font: 10.500px "Liberation Sans", sans-serif; flex: none; }

/* workspace */
.work { width: 1402px; flex: none; display: grid; grid-template-columns: 20px 1365px 17px; grid-template-rows: 18px 880px 17px; background: #f3f3f3; }
.corner { background: #fff; border-right: 1px solid #ccc; border-bottom: 1px solid #ccc; }
.rt { grid-column: 2 / 4; padding-left: 8.300px; display: flex; overflow: hidden; background: #fff linear-gradient(#ccc, #ccc) bottom / 100% 1px no-repeat; }
.rt span { flex: 0 0 57.900px; height: 18px; font-size: 10px; line-height: 13px; color: #888; padding-left: 3px; border-left: 1px solid #ccc; background: repeating-linear-gradient(90deg, transparent 0 4.790px, #ccc 4.790px 5.790px) 0 bottom / 100% 3px no-repeat; }
.rl { grid-row: 2 / 4; background: #fff; border-right: 1px solid #ccc; overflow: hidden; }
.rl span { display: flex; height: 57.900px; border-bottom: 1px solid #ccc; justify-content: flex-start; padding: 0 0 2px 1px; align-items: flex-end; background: repeating-linear-gradient(180deg, transparent 0 4.790px, #ccc 4.790px 5.790px) right / 5px 100% no-repeat; }
.rl i { font-style: normal; font-size: 10px; color: #888; writing-mode: vertical-rl; transform: rotate(180deg); line-height: 12px; }
.canvas { position: relative; overflow: hidden; background: #ececec; }
.page { position: absolute; left: 182px; top: 0; width: 911px; height: 880px; background: #fff; }
.diagram { position: absolute; left: 0; top: 0; width: 911px; height: 880px; }
.d-l { font: 700 14.500px "Open Sans", sans-serif; letter-spacing: .8px; fill: #5d6f87; text-anchor: middle; }
.d-n { font: 700 13.500px "Open Sans", sans-serif; fill: #8493a8; text-anchor: middle; }

/* sticky notes */
.note { position: absolute; width: 116.500px; height: 116.500px; padding: 11px 11px; font-size: 8px; line-height: 11.700px; border: 1px solid; clip-path: polygon(0 0, 100% 0, 100% 87%, 87% 100%, 0 100%); white-space: nowrap; }
.note::after { content: ""; position: absolute; right: -1px; bottom: -1px; width: 16px; height: 16px; clip-path: polygon(0 0, 100% 0, 0 100%); border-left: 1px solid; border-top: 1px solid; border-color: inherit; }
.note.sm { font-size: 7.500px; }
.note.xs { font-size: 7.300px; font-family: "Open Sans", sans-serif; padding-top: 10px; }
.y { background: #ffffc9; border-color: #f0eec4; color: #777240; }
.y::after { background: #fbfbe2; }
.p { background: #e0d9f6; border-color: #d9d2ef; color: #685f8a; padding-left: 10px; }
.p::after { background: #efebfb; }
.g { background: #e0ebbf; border-color: #d6e3b7; color: #5e7c3f; }
.g::after { background: #eff5dd; }
.o { background: #fee8cf; border-color: #f5dfc8; color: #a0633f; font-family: "Open Sans", sans-serif; font-size: 7.700px; }
.o::after { background: #fff4e6; }
.s1 { left: 210px; top: 28px; }
.s2 { left: 333px; top: 92px; }
.s3 { left: 73px; top: 110px; }
.s4 { left: 73px; top: 266px; }
.s5 { left: 226px; top: 221px; transform: rotate(1.800deg); font-size: 7px; }
.s6 { left: 702px; top: 104px; }
.s7 { left: 553px; top: 168px; }
.s8 { left: 717px; top: 266px; }
.s9 { left: 58px; top: 486px; padding-top: 10px; }
.s10 { left: 185px; top: 590px; }
.s11 { left: 48px; top: 646px; }
.s12 { left: 315px; top: 661px; padding-top: 10px; }
.s13 { left: 182px; top: 737px; }
.s14 { left: 743px; top: 481px; transform: rotate(-2.800deg); padding-top: 10px; }
.s15 { left: 614px; top: 572px; transform: rotate(-3deg); padding-top: 10px; }
.s16 { left: 760px; top: 614px; transform: rotate(-3deg); }
.s17 { left: 644px; top: 725px; transform: rotate(-3deg); }
.s18 { left: 483px; top: 664px; transform: rotate(-2deg); }

/* canvas overlays */
.zoomctl { position: absolute; left: 15px; bottom: 0; display: flex; gap: 8px; }
.zc { height: 36px; background: #f8f8f8; border: 1px solid #e6e6e6; border-radius: 6px; display: flex; align-items: center; justify-content: space-between; }
.zc-zoom { width: 116px; padding: 0 11px; font-size: 11px; color: #111; }
.zc-undo { width: 72px; padding: 0 9px; }
.zi { width: 12px; height: 12px; }
.ui { width: 17px; height: 17px; }
.chat { position: absolute; right: 0; bottom: 1px; width: 74px; height: 29px; border: 2px solid #0069e0; border-radius: 15px; background: #fff; color: #0069e0; font: 13px "Open Sans", sans-serif; display: flex; align-items: center; padding: 0 0 0 14px; }
.chat-i { width: 15px; height: 15px; margin-right: 5px; flex: none; }

/* scrollbars */
.vs { background: #f3f3f3; position: relative; }
.vs-th { position: absolute; left: 2px; top: 297px; width: 13px; height: 311px; background: #bfbfbf; }
.hs { background: #f3f3f3; position: relative; }
.hs-th { position: absolute; left: 397px; top: 1px; width: 610px; height: 14px; background: #bfbfbf; }
.corner2 { background: #d9d9d9; }
.tri { position: absolute; width: 0; height: 0; border: 4px solid transparent; }
.tri-u { left: 5px; top: 6px; border-bottom: 5px solid #444; border-top: 0; }
.tri-d { left: 5px; bottom: 7px; border-top: 5px solid #444; border-bottom: 0; }
.tri-l { left: 6px; top: 4px; border-right: 5px solid #444; border-left: 0; }
.tri-r { right: 5px; top: 4px; border-left: 5px solid #444; border-right: 0; }

/* right panel */
.panel { width: 260px; flex: none; background: #f3f3f3; border-left: 1px solid #ccc; font-size: 12px; }
.ph { height: 24px; background: #fff; border-bottom: 1px solid #ddd; font-size: 10px; color: #444; padding: 0 0 0 10px; line-height: 23px; letter-spacing: .1px; }
.ph2 { border-top: 1px solid #ddd; }
.ph3 { border-top: 1px solid #ddd; height: 26px; line-height: 24px; }
.pb { padding: 20px 13px 0; height: 207px; }
.pb2 { height: 123px; padding-top: 21px; }
.pb3 { padding-top: 0; }
.sel { height: 28px; width: 232px; background: #f5f5f5; border: 1px solid #ccc; border-radius: 3px; display: flex; align-items: center; padding: 0 0 1px 5px; font-size: 13px; color: #222; position: relative; }
.doc { width: 12px; height: 14px; margin-right: 9px; }
.dn { position: absolute; right: 8px; top: 50%; margin-top: -2px; border: 3.500px solid transparent; border-top: 5px solid #555; border-bottom: 0; }
.dims { display: flex; height: 59px; margin-top: 6px; }
.dim-l { width: 91px; display: flex; flex-direction: column; gap: 11px; flex: none; }
.inp { height: 24px; border: 1px solid #ccc; border-radius: 3px; background: #f5f5f5; display: flex; align-items: center; padding-left: 5px; font-size: 13.300px; color: #222; }
.arr { width: 12px; height: 12px; margin-right: 5px; flex: none; }
.dim-m { width: 49px; position: relative; flex: none; }
.brk { position: absolute; left: 0; top: 12px; width: 14px; height: 35px; border: 1px solid #ddd; border-left: 0; border-radius: 0 3px 3px 0; }
.lk { position: absolute; left: 9px; top: 26px; width: 11px; height: 13px; background: #f3f3f3; }
.dim-r { width: 92px; flex: none; }
.orient { display: flex; height: 27px; }
.or { width: 46px; display: flex; align-items: center; justify-content: center; }
.or-on { background: #fff; border-right: 1px solid #e6e6e6; }
.or-i { width: 12px; height: 16px; }
.or-l { width: 16px; height: 12px; }
.fill { height: 25px; margin-top: 7px; border: 1px solid #ccc; border-radius: 3px; display: flex; align-items: center; padding: 1px; }
.fill-i { width: 16px; height: 16px; margin: 0 4px; flex: none; }
.fill-b { flex: 1; height: 21px; background: #fff; border: 1px solid #ddd; border-radius: 0 2px 2px 0; }
.lnk { display: block; color: #1a73e8; font-size: 12.900px; line-height: 14px; width: max-content; border-bottom: 1px dotted #1a73e8; }
.l1 { margin-top: 9px; }
.l2 { margin-top: 10px; }
.l3 { margin-top: 8px; }
.hide { display: flex; align-items: center; margin-top: 9px; color: #888; font-size: 12.700px; }
.cb { width: 13px; height: 13px; border: 1px solid #777; border-radius: 2px; background: #fff; margin-right: 4px; flex: none; position: relative; }
.cb.on { background: #0069f0; border-color: #0069f0; }
.cb.on::after { content: ""; position: absolute; left: 3.500px; top: 1px; width: 4px; height: 7px; border: solid #fff; border-width: 0 2px 2px 0; transform: rotate(40deg); }
.frow { display: flex; gap: 7px; }
.frow2 { gap: 8px; margin-top: 7px; }
.combo { height: 26px; border: 1px solid #ccc; border-radius: 2px; display: flex; align-items: center; position: relative; color: #999; font-size: 12px; }
.c-font { width: 144px; }
.c-none { width: 81px; }
.c-none .c-t { color: #222; font-size: 9.500px; }
.c-t { flex: 1; padding-left: 5px; white-space: nowrap; }
.c-b { width: 20px; height: 100%; border-left: 1px solid #ccc; position: relative; flex: none; }
.c-b .dn { right: 6px; margin-top: -4px; border-top-color: #444; }
.c-a { width: 112px; padding: 1px; }
.a-l { width: 24px; text-align: center; color: #666; font-size: 11px; }
.a-v { flex: 1; height: 22px; background: #fff; border: 1px solid #ddd; border-radius: 0 2px 2px 0; text-align: center; font-size: 9px; line-height: 22px; color: #777; }
.c-size { width: 112px; font-size: 13px; padding-bottom: 1px; }
.sz-i { margin-left: 4px; width: 10px; height: 9px; flex: none; }
.c-size .c-t { padding-left: 5px; }
.px { font-size: 7px; color: #bbb; margin-right: 3px; }
.rtabs { display: flex; height: 39px; font-size: 13px; font-weight: 700; line-height: 44px; }
.rt-on { width: 97px; padding-left: 6px; color: #1a66e8; border-bottom: 2px solid #1a66e8; flex: none; }
.rt-off { padding-left: 7px; color: #888; font-weight: 400; }
.chk { display: flex; margin-top: 17px; }
.ck { display: flex; align-items: center; color: #222; font-size: 12.700px; height: 16px; }
.ck1 { width: 68px; }
.ck2 { width: 90px; }
.ck2 .cb { margin-right: 5px; }
.ck-all { margin-top: 13px; }
.sw { display: flex; margin-top: 17px; height: 21px; }
.sw span { width: 21px; display: block; }
.sw-c { background: conic-gradient(#d8d8d8 25%, #f8f8f8 0 50%, #d8d8d8 0 75%, #f8f8f8 0) 0 0 / 11px 11px; }
.sw-1 { background: #eef1f7; }
.sw-2 { background: #7a8ca3; }
.sw-3 { background: #fff; }
.hint { margin: 7px 0 0; color: #888; font-size: 12.800px; line-height: 18px; }

/* taskbar */
.task { height: 48px; flex: none; display: flex; align-items: center; color: #eee; background: linear-gradient(90deg, #1c1d21 0%, #1f1e22 12%, #2c1c24 15%, #231c28 20%, #1e1d22 35%, #1f1d22 55%, #3e1a1e 65%, #2a1b22 75%, #1f1b20 85%, #2a1a2c 100%); }
.weather { width: 697px; display: flex; align-items: center; flex: none; padding-left: 20px; font: 11.800px/16px "Open Sans", sans-serif; }
.w-i { width: 24px; height: 14px; margin-right: 7px; flex: none; }
.w-d { color: #bbb; }
.tk { width: 44px; height: 40px; display: flex; justify-content: center; align-items: center; flex: none; position: relative; }
.ti { width: 24px; height: 24px; display: block; }
.tk-on { background: #2e2c32; border-radius: 4px; width: 36px; margin: 0 4px; }
.dot { position: absolute; left: 19px; bottom: 2px; width: 6px; height: 3px; border-radius: 2px; background: #8a8a8a; }
.dot-on { left: 11px; width: 15px; background: #f0705a; }
.badge8 { position: absolute; left: 23px; top: 2px; width: 15px; height: 15px; border-radius: 50%; background: #e81123; color: #fff; font: 10px/15px "Open Sans", sans-serif; text-align: center; }
.tray { margin-left: auto; display: flex; align-items: center; flex: none; font: 12px/16px "Open Sans", sans-serif; }
.tr { flex: none; display: block; }
.tr-ch { width: 13px; height: 8px; margin-right: 9px; }
.tr-cl { width: 17px; height: 11px; margin-right: 7px; }
.tr-sy { width: 16px; height: 16px; }
.lang { width: 30px; text-align: center; margin: 0 0 0 10px; }
.tr-wf { width: 17px; height: 14px; margin-left: 15px; }
.tr-vo { width: 17px; height: 14px; margin-left: 7px; }
.tr-ba { width: 17px; height: 14px; margin-left: 7px; }
.clock { width: 69px; text-align: right; margin-left: 5px; }
.notif { width: 20px; height: 20px; border-radius: 50%; background: #ee7a62; color: #222; font-size: 10px; line-height: 20px; text-align: center; margin: 0 18px 0 6px; }
```
